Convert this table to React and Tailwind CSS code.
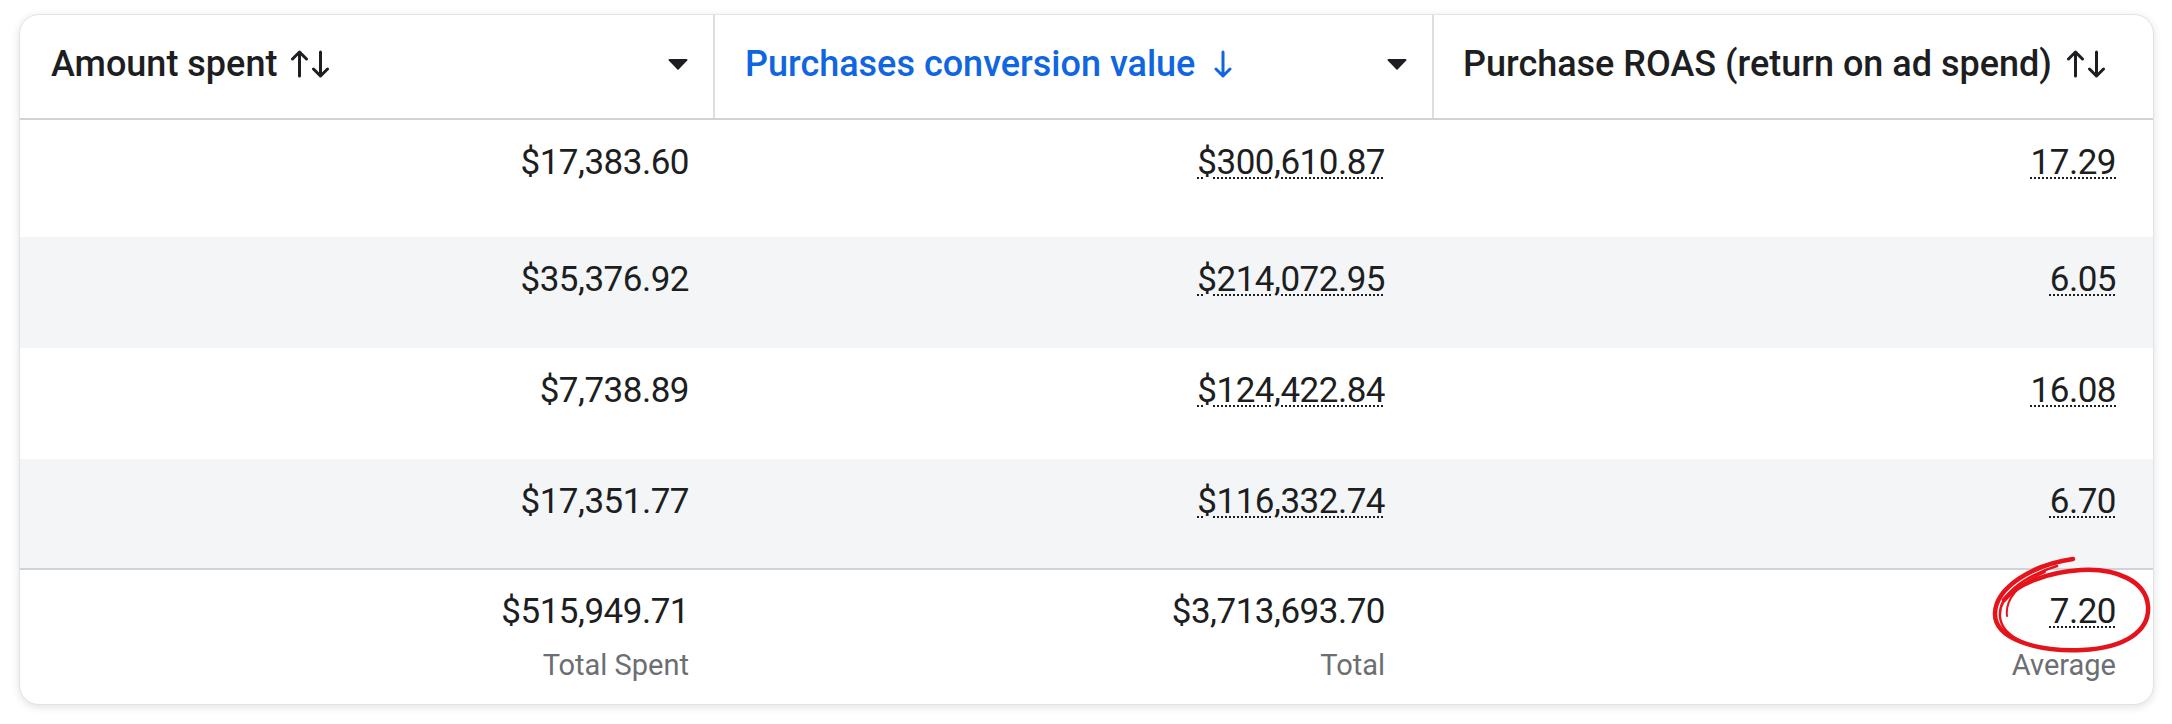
import React from "react";

const rows = [
  { h: "h-[117px]", bg: "bg-white", spent: "$17,383.60", value: "$300,610.87", roas: "17.29" },
  { h: "h-[111px]", bg: "bg-[#f3f5f7]", spent: "$35,376.92", value: "$214,072.95", roas: "6.05" },
  { h: "h-[111px]", bg: "bg-white", spent: "$7,738.89", value: "$124,422.84", roas: "16.08" },
  { h: "h-[109px]", bg: "bg-[#f3f5f7]", spent: "$17,351.77", value: "$116,332.74", roas: "6.70" },
];

const SortArrows = () => (
  <svg width="40" height="28" viewBox="0 0 40 28" fill="none" stroke="currentColor" strokeWidth="3" strokeLinecap="round" strokeLinejoin="round">
    <path d="M9.5 2v24M2.5 9L9.5 2l7 7" />
    <path d="M30.5 2v24M23.5 19l7 7 7-7" />
  </svg>
);

const DownArrow = () => (
  <svg width="20" height="28" viewBox="0 0 20 28" fill="none" stroke="currentColor" strokeWidth="3" strokeLinecap="round" strokeLinejoin="round">
    <path d="M10 2v24M3 19l7 7 7-7" />
  </svg>
);

const Caret = () => (
  <svg width="20" height="12" viewBox="0 0 20 12">
    <path d="M1.5 1h17a1 1 0 0 1 .8 1.6l-8.5 8.7a1 1 0 0 1-1.6 0L.7 2.6A1 1 0 0 1 1.5 1z" fill="#1c1e21" />
  </svg>
);

const Scribble = () => (
  <svg
    className="pointer-events-none absolute right-[-4px] top-[-20px]"
    width="172"
    height="112"
    viewBox="0 0 172 112"
    fill="none"
    stroke="#e5131c"
    strokeLinecap="round"
  >
    <path
      strokeWidth="4.5"
      d="M88 9C46 15 11 38 10 63C9 89 52 102 97 100C140 98 165 81 163 56C161 31 131 18 96 20C61 22 31 35 19 50"
    />
    <path strokeWidth="2.5" d="M72 16C37 27 13 46 15 67C17 86 42 97 72 100" />
    <path strokeWidth="2" d="M60 22C32 34 20 50 22 66" />
  </svg>
);

export default function App() {
  const cell = "flex justify-end pt-[23px] text-[35px] leading-[40px] tracking-[-0.5px] text-[#1c1e21]";
  const dotted = "underline decoration-dotted decoration-2 underline-offset-[3px]";
  const label = "mt-[16px] text-[29px] leading-[34px] text-[#6b6e73]";

  return (
    <div className="min-h-screen bg-white pl-[19px] pt-[14px]" style={{ fontFamily: "Roboto, 'Liberation Sans', sans-serif" }}>
      <div className="w-[2135px] rounded-[20px] border border-[#e1e3e6] bg-white shadow-[0_2px_8px_rgba(0,0,0,0.12)]">
        {/* header */}
        <div className="grid h-[105px] grid-cols-[693px_719px_1fr] border-b-2 border-[#cfd2d6] text-[36px] font-medium">
          <div className="flex items-center justify-between pb-[6px] pl-[31px] pr-[25px] text-[#1c1e21]">
            <div className="flex items-center gap-[13px]">
              <span>Amount spent</span>
              <SortArrows />
            </div>
            <Caret />
          </div>
          <div className="flex items-center justify-between border-l-2 border-[#dcdee2] pb-[6px] pl-[30px] pr-[25px] text-[#0f66e0]">
            <div className="flex items-center gap-[18px]">
              <span>Purchases conversion value</span>
              <DownArrow />
            </div>
            <Caret />
          </div>
          <div className="flex items-center border-l-2 border-[#dcdee2] pb-[6px] pl-[29px] text-[#1c1e21]">
            <div className="flex items-center gap-[14px]">
              <span>Purchase ROAS (return on ad spend)</span>
              <SortArrows />
            </div>
          </div>
        </div>

        {/* rows */}
        {rows.map((r, i) => (
          <div key={i} className={`grid grid-cols-[693px_719px_1fr] ${r.h} ${r.bg}`}>
            <div className={`${cell} pr-[24px]`}>{r.spent}</div>
            <div className={`${cell} pr-[47px]`}>
              <span className={dotted}>{r.value}</span>
            </div>
            <div className={`${cell} pr-[37px]`}>
              <span className={dotted}>{r.roas}</span>
            </div>
          </div>
        ))}

        {/* totals */}
        <div className="grid h-[136px] grid-cols-[693px_719px_1fr] border-t-2 border-[#cfd2d6]">
          <div className="flex flex-col items-end pr-[24px] pt-[22px]">
            <span className="text-[35px] leading-[40px] tracking-[-0.5px] text-[#1c1e21]">$515,949.71</span>
            <span className={label}>Total Spent</span>
          </div>
          <div className="flex flex-col items-end pr-[47px] pt-[22px]">
            <span className="text-[35px] leading-[40px] tracking-[-0.5px] text-[#1c1e21]">$3,713,693.70</span>
            <span className={label}>Total</span>
          </div>
          <div className="relative flex flex-col items-end pr-[37px] pt-[22px]">
            <span className={`text-[35px] leading-[40px] tracking-[-0.5px] text-[#1c1e21] ${dotted}`}>7.20</span>
            <span className={label}>Average</span>
            <Scribble />
          </div>
        </div>
      </div>
    </div>
  );
}
